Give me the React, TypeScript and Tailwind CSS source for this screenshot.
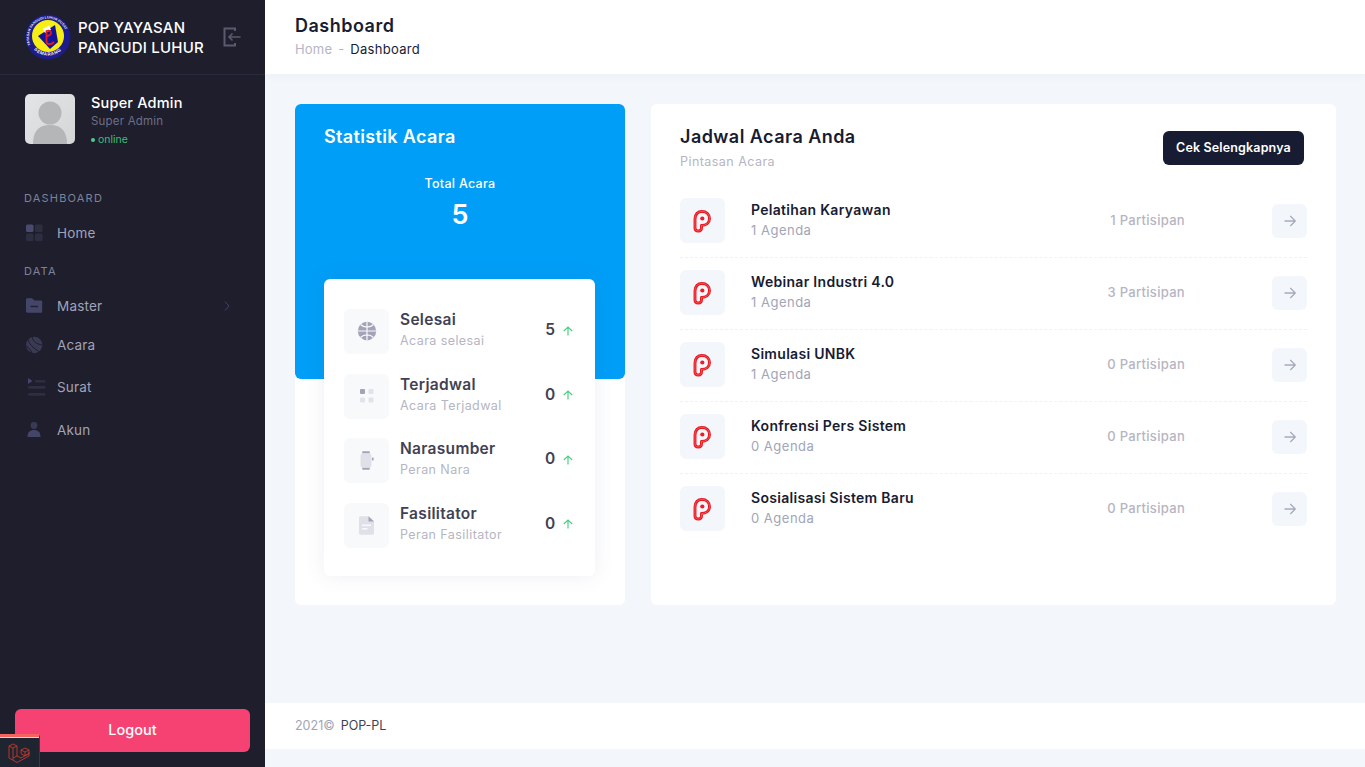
import React from "react";

function Logo() {
  return (
    <svg width="46" height="46" viewBox="0 0 46 46">
      <defs>
        <path id="ringTop" d="M5.5 31 A19 19 0 1 1 40.5 31" fill="none" />
        <path id="ringBot" d="M7 33 A19 19 0 0 0 39 33" fill="none" />
      </defs>
      <circle cx="23" cy="23" r="22.5" fill="#1c1c8c" />
      <circle cx="23" cy="22" r="16" fill="#f7ee14" />
      <text fontSize="3.5" fill="#e8e8f0" fontFamily="Liberation Sans" fontWeight="700">
        <textPath href="#ringTop">YAYASAN PANGUDI LUHUR PUSAT</textPath>
      </text>
      <text fontSize="4.6" fill="#f4f4f4" fontFamily="Liberation Sans" fontWeight="700" letterSpacing="0.5">
        <textPath href="#ringBot" startOffset="8%">SEMARANG</textPath>
      </text>
      <path d="M13 22 L30 11 L33 28 L25 35 Z" fill="#14149a" />
      <path d="M18 15 L24 11.5 L26 16 L20 19 Z" fill="#ffffff" />
      <path d="M21.5 28 V17 C27 15 28 21 22 22 M21.5 28 C22 31 26 31 29 28" fill="none" stroke="#e61919" strokeWidth="1.8" />
    </svg>
  );
}

function Avatar() {
  return (
    <div className="w-[50px] h-[50px] rounded-[5px] overflow-hidden bg-gradient-to-br from-[#e4e5e6] to-[#d4d5d6]">
      <svg width="50" height="50" viewBox="0 0 50 50">
        <circle cx="25" cy="19" r="11.5" fill="#b5b6b7" />
        <path d="M8 50 C8 36 15 31 25 31 C35 31 42 36 42 50 Z" fill="#b5b6b7" />
      </svg>
    </div>
  );
}

function HomeIcon() {
  return (
    <svg width="18" height="18" viewBox="0 0 18 18">
      <rect x="1" y="0.5" width="7.5" height="7.5" rx="1.5" fill="#4a4a70" />
      <rect x="10" y="0.5" width="7.5" height="7.5" rx="1.5" fill="#2e2e42" />
      <rect x="1" y="9.5" width="7.5" height="7.5" rx="1.5" fill="#2e2e42" />
      <rect x="10" y="9.5" width="7.5" height="7.5" rx="1.5" fill="#2e2e42" />
    </svg>
  );
}
function FolderIcon() {
  return (
    <svg width="18" height="18" viewBox="0 0 18 18">
      <path d="M1 3 C1 1.8 1.5 1.3 2.5 1.3 H7 L9.5 3.6 H16 C16.8 3.6 17.2 4 17.2 4.8 V14.5 C17.2 15.4 16.8 15.7 16 15.7 H2.5 C1.5 15.7 1 15.3 1 14.5 Z" fill="#45456a" />
      <rect x="5.5" y="8.8" width="7.5" height="1.4" fill="#1e1e2d" />
    </svg>
  );
}
function GlobeDark() {
  return (
    <svg width="18" height="18" viewBox="0 0 18 18">
      <circle cx="9.2" cy="9" r="8.2" fill="#3a3a55" />
      <path d="M7 0.8 C8 5 11 8 17 9 M3 3 C4 8 8 12 14 15.5 M1 10 C4 12 6 14 7 17.2" stroke="#1e1e2d" strokeWidth="1" fill="none" />
    </svg>
  );
}
function ListIcon() {
  return (
    <svg width="18" height="18" viewBox="0 0 18 18">
      <path d="M0 0 L4.5 3 L0 6 Z" fill="#45456a" />
      <rect x="7" y="2" width="10.5" height="2.6" rx="1.2" fill="#2e2e42" />
      <rect x="0" y="8" width="17.5" height="2.8" rx="1.2" fill="#2e2e42" />
      <rect x="0" y="15" width="17.5" height="2.8" rx="1.2" fill="#2e2e42" />
    </svg>
  );
}
function UserIcon() {
  return (
    <svg width="18" height="18" viewBox="0 0 18 18">
      <circle cx="9" cy="4.5" r="3.4" fill="#3a3a55" />
      <path d="M2.5 16 C2.5 11 5 9 9 9 C13 9 15.5 11 15.5 16 Z" fill="#45456a" />
    </svg>
  );
}

function PIcon() {
  return (
    <svg width="20" height="24" viewBox="0 0 20 24">
      <path d="M3 10 C3 5 6 2.5 10 2.5 C14.5 2.5 17.5 5.5 17.5 9.5 C17.5 14 14 16.5 9.5 16.5 V19 C9.5 21 8.3 22 6.3 22 C4.2 22 3 20.8 3 19 Z" fill="none" stroke="#e6151d" strokeWidth="2.9" strokeLinejoin="round" />
      <path d="M3 10 C3 5 6 2.5 10 2.5 C14.5 2.5 17.5 5.5 17.5 9.5 C17.5 14 14 16.5 9.5 16.5 V19 C9.5 21 8.3 22 6.3 22 C4.2 22 3 20.8 3 19 Z" fill="none" stroke="#ff5f66" strokeWidth="0.8" strokeLinejoin="round" />
      <circle cx="10.3" cy="9.5" r="2.1" fill="#ee1c25" />
    </svg>
  );
}

function ArrowRight() {
  return (
    <svg width="14" height="14" viewBox="0 0 14 14" fill="none">
      <path d="M1.5 7 H12 M7.3 2 L12.3 7 L7.3 12" stroke="#a9a9bd" strokeWidth="1.3" />
    </svg>
  );
}
function ArrowUp() {
  return (
    <svg width="10" height="10" viewBox="0 0 10 10" fill="none">
      <path d="M5 9.5 V1 M0.8 5 L5 1 L9.2 5" stroke="#50cd89" strokeWidth="1.2" />
    </svg>
  );
}

const GlobeLight = () => (
  <svg width="20" height="20" viewBox="0 0 20 20" className="-mt-[1px]">
    <circle cx="10" cy="10" r="9.2" fill="#a3a3b8" />
    <path d="M1 10 H19 M10 1 V19 M3.5 3.5 C7 7 13 7 16.5 3.5 M3.5 16.5 C7 13 13 13 16.5 16.5" stroke="#f8f9fb" strokeWidth="1.2" fill="none" />
  </svg>
);
const DotsLight = () => (
  <svg width="14" height="14" viewBox="0 0 14 14">
    <rect x="0" y="0" width="5" height="5" rx="1" fill="#a3a3b8" />
    <rect x="8.5" y="0" width="5" height="5" rx="1" fill="#e1e3ea" />
    <rect x="0" y="8.5" width="5" height="5" rx="1" fill="#e1e3ea" />
    <rect x="8.5" y="8.5" width="5" height="5" rx="1" fill="#e1e3ea" />
  </svg>
);
const WatchLight = () => (
  <svg width="14" height="19" viewBox="0 0 14 19">
    <rect x="0.5" y="2.5" width="11" height="14" rx="2.5" fill="#dfe0e8" />
    <path d="M2.5 0.3 H9.5 L10 2.3 H2 Z M2 16.7 H10 L9.5 18.7 H2.5 Z" fill="#a3a3b8" />
    <rect x="12" y="6.5" width="1.6" height="3" rx="0.6" fill="#a3a3b8" />
  </svg>
);
const DocLight = () => (
  <svg width="15" height="19" viewBox="0 0 15 19">
    <path d="M1.5 0.3 H9.5 L15 5.5 V17 C15 18 14.5 18.7 13.5 18.7 H1.5 C0.6 18.7 0 18 0 17 V2 C0 1 0.6 0.3 1.5 0.3 Z" fill="#dfe0e8" />
    <path d="M9.5 0.3 L15 5.5 H9.5 Z" fill="#a3a3b8" />
    <rect x="3" y="8.5" width="9" height="1.6" fill="#f8f9fb" />
    <rect x="3" y="12" width="5.5" height="1.6" fill="#f8f9fb" />
  </svg>
);

const navItem = "flex items-center h-[20px] pl-[25px]";
const navIconBox = "w-[32px] flex items-center";
const navText = "text-[13.5px] tracking-[0.2px] text-[#a2a3b7] pt-[1px]";

function Stat({ icon, title, sub, n }: { icon: React.ReactNode; title: string; sub: string; n: string }) {
  return (
    <div className="flex items-center h-[45px]">
      <div className="w-[45px] h-[45px] rounded-[6px] bg-[#f8f9fb] flex items-center justify-center shrink-0">{icon}</div>
      <div className="ml-[11px] flex-1 -mt-[2px]">
        <div className="text-[15.5px] leading-[20px] font-semibold tracking-[0.3px] text-[#3f4254]">{title}</div>
        <div className="mt-[1px] text-[12.5px] leading-[20px] tracking-[0.42px] text-[#b5b5c3]">{sub}</div>
      </div>
      <div className="-mt-[3px] text-[15.5px] font-semibold text-[#3f4254] w-[12px] text-center">{n}</div>
      <div className="-mt-[2px] ml-[7px] flex items-center"><ArrowUp /></div>
    </div>
  );
}

function Row({ title, agenda, part, last }: { title: string; agenda: string; part: string; last?: boolean }) {
  return (
    <div className={last ? "flex items-center" : "flex items-center pb-[14px] mb-[12px] border-b border-dashed border-[#eff2f5]"}>
      <div className="w-[45px] h-[45px] rounded-[6px] bg-[#f3f6fa] flex items-center justify-center shrink-0 pr-[1px]"><PIcon /></div>
      <div className="ml-[26px] flex-1 -mt-[2px]">
        <div className="text-[14px] leading-[20px] font-semibold tracking-[0.3px] text-[#181c32]">{title}</div>
        <div className="text-[13px] leading-[20px] tracking-[0.5px] text-[#a1a5b7]">{agenda}</div>
      </div>
      <div className="text-[13px] font-medium tracking-[0.3px] text-[#b5b5c3] mr-[87px]">{part}</div>
      <div className="mt-[1px] w-[35px] h-[34px] rounded-[6px] bg-[#f3f6fa] flex items-center justify-center"><ArrowRight /></div>
    </div>
  );
}

export default function App() {
  return (
    <div className="relative flex h-[767px] overflow-hidden bg-[#f3f6fa] font-['Inter',sans-serif]">
      <aside className="w-[265px] shrink-0 h-full bg-[#1e1e2d] flex flex-col">
        <div className="h-[75px] border-b border-[#2b2b40] flex items-center pl-[25px] pr-[24px]">
          <Logo />
          <div className="ml-[7px] flex-1 pt-[2px] text-[15px] leading-[20px] font-medium tracking-[0.2px] text-white">
            POP YAYASAN<br />PANGUDI LUHUR
          </div>
          <svg width="18" height="20" viewBox="0 0 18 20" fill="none">
            <path d="M12 4 V1.5 H1.5 V18.5 H12 V16" stroke="#5a5a6e" strokeWidth="2" />
            <path d="M17.5 10 H6 M9.5 6.5 L6 10 L9.5 13.5" stroke="#5a5a6e" strokeWidth="1.6" />
          </svg>
        </div>
        <div className="flex items-start pl-[25px] pt-[19px] h-[94px]">
          <Avatar />
          <div className="ml-[16px]">
            <div className="text-[14.5px] leading-[17px] font-medium tracking-[0.2px] text-white">Super Admin</div>
            <div className="mt-[2px] text-[11.5px] leading-[16px] tracking-[0.2px] text-[#6c7086]">Super Admin</div>
            <div className="mt-[3px] text-[10.5px] leading-[16px] text-[#3dbb75] flex items-center"><span className="w-[4px] h-[4px] rounded-full bg-[#50cd89] mr-[3px]" />online</div>
          </div>
        </div>
        <div className="pt-[22px]">
          <div className="pl-[24px] text-[11px] leading-[14px] tracking-[1.2px] text-[#7e8299]">DASHBOARD</div>
          <div className={navItem + " mt-[18px]"}>
            <div className={navIconBox}><HomeIcon /></div><span className={navText}>Home</span>
          </div>
          <div className="pl-[24px] mt-[21px] text-[11px] leading-[14px] tracking-[1.2px] text-[#7e8299]">DATA</div>
          <div className={navItem + " mt-[18px] pr-[35px]"}>
            <div className={navIconBox}><FolderIcon /></div><span className={navText + " flex-1"}>Master</span>
            <svg width="6" height="10" viewBox="0 0 6 10" fill="none"><path d="M1 0.5 L5 5 L1 9.5" stroke="#45456a" strokeWidth="1" /></svg>
          </div>
          <div className={navItem + " mt-[19px]"}>
            <div className={navIconBox}><GlobeDark /></div><span className={navText}>Acara</span>
          </div>
          <div className={navItem + " mt-[22px]"}>
            <div className={navIconBox}><div className="ml-[3px]"><ListIcon /></div></div><span className={navText}>Surat</span>
          </div>
          <div className={navItem + " mt-[23px]"}>
            <div className={navIconBox}><UserIcon /></div><span className={navText}>Akun</span>
          </div>
        </div>
        <div className="mt-auto px-[15px] pb-[15px]">
          <div className="h-[43px] pb-[2px] rounded-[6px] bg-[#f64272] flex items-center justify-center text-[14.5px] font-medium text-white">Logout</div>
        </div>
      </aside>

      <div className="flex-1 flex flex-col min-w-0">
        <header className="h-[74px] shrink-0 bg-white pl-[30px] pt-[15px] shadow-[0_2px_10px_rgba(0,0,0,0.03)]">
          <div className="text-[18px] leading-[22px] font-semibold tracking-[0.5px] text-[#181c32]">Dashboard</div>
          <div className="mt-[3px] text-[13px] leading-[18px] flex items-center">
            <span className="text-[#b5b5c3] tracking-[0.2px]">Home</span>
            <span className="mx-[6px] text-[#b5b5c3]">-</span>
            <span className="text-[#181c32] tracking-[0.3px]">Dashboard</span>
          </div>
        </header>

        <main className="flex gap-[26px] pl-[30px] pr-[29px] pt-[30px] h-[629px] items-start shrink-0">
          <section className="w-[330px] h-[501px] shrink-0 bg-white rounded-[6px] overflow-hidden flex flex-col">
            <div className="h-[275px] bg-[#009ef7] rounded-b-[6px] px-[29px] pt-[22px] text-white shrink-0">
              <div className="text-[18px] leading-[22px] font-semibold tracking-[0.35px]">Statistik Acara</div>
              <div className="mt-[26px] text-center text-[12.5px] leading-[20px] font-medium tracking-[0.3px]">Total Acara</div>
              <div className="mt-[5px] text-center text-[27px] leading-[32px] font-semibold">5</div>
            </div>
            <div className="-mt-[100px] mx-[29px] w-[271px] h-[297px] rounded-[6px] bg-white shadow-[0_0_20px_rgba(76,87,125,0.1)] pl-[20px] pr-[22px] pt-[30px] flex flex-col gap-[19.5px]">
              <Stat icon={<GlobeLight />} title="Selesai" sub="Acara selesai" n="5" />
              <Stat icon={<DotsLight />} title="Terjadwal" sub="Acara Terjadwal" n="0" />
              <Stat icon={<WatchLight />} title="Narasumber" sub="Peran Nara" n="0" />
              <Stat icon={<DocLight />} title="Fasilitator" sub="Peran Fasilitator" n="0" />
            </div>
          </section>

          <section className="w-[685px] h-[501px] shrink-0 bg-white rounded-[6px] pl-[29px] pr-[29px]">
            <div className="flex justify-between items-start pt-[22px] h-[94px]">
              <div>
                <div className="text-[18px] leading-[22px] font-semibold tracking-[0.45px] text-[#181c32]">Jadwal Acara Anda</div>
                <div className="mt-[5px] text-[12.5px] leading-[18px] tracking-[0.45px] text-[#b5b5c3]">Pintasan Acara</div>
              </div>
              <div className="mt-[5px] mr-[3px] w-[141px] h-[34px] rounded-[6px] bg-[#181c32] flex items-center justify-center text-[12.5px] tracking-[0.15px] font-semibold text-white">Cek Selengkapnya</div>
            </div>
            <div>
              <Row title="Pelatihan Karyawan" agenda="1 Agenda" part="1 Partisipan" />
              <Row title="Webinar Industri 4.0" agenda="1 Agenda" part="3 Partisipan" />
              <Row title="Simulasi UNBK" agenda="1 Agenda" part="0 Partisipan" />
              <Row title="Konfrensi Pers Sistem" agenda="0 Agenda" part="0 Partisipan" />
              <Row title="Sosialisasi Sistem Baru" agenda="0 Agenda" part="0 Partisipan" last />
            </div>
          </section>
        </main>

        <footer className="h-[46px] shrink-0 bg-white pl-[30px] flex items-center text-[12.5px]">
          <span className="text-[#a1a5b7]">2021©</span>
          <span className="ml-[6px] text-[#3f4254]">POP-PL</span>
        </footer>
      </div>

      <div className="absolute left-0 bottom-0 w-[40px] h-[33px] bg-[#1e2430] border-t-[3px] border-[#f4645f] border-r border-r-[#333b4a]">
        <div className="h-[1px] bg-[#d8dbe0]" />
        <svg className="ml-[8px] mt-[5px]" width="23" height="20" viewBox="0 0 23 20" fill="none" stroke="#c43a2f" strokeWidth="0.9" strokeLinejoin="round">
          <path d="M1 3 L5 1 L9 3 V13 L13 15 M1 3 V15 L9 19.5 L21 13 V9 M1 3 L5 5 L9 3 M5 5 V17 M9 13 L5 15 M13 15 L21 10.5 M13 7 L17 5 L21 7 V10.5 L17 13 L13 10.5 Z M13 7 L17 9 L21 7 M17 9 V13" />
        </svg>
      </div>
    </div>
  );
}
